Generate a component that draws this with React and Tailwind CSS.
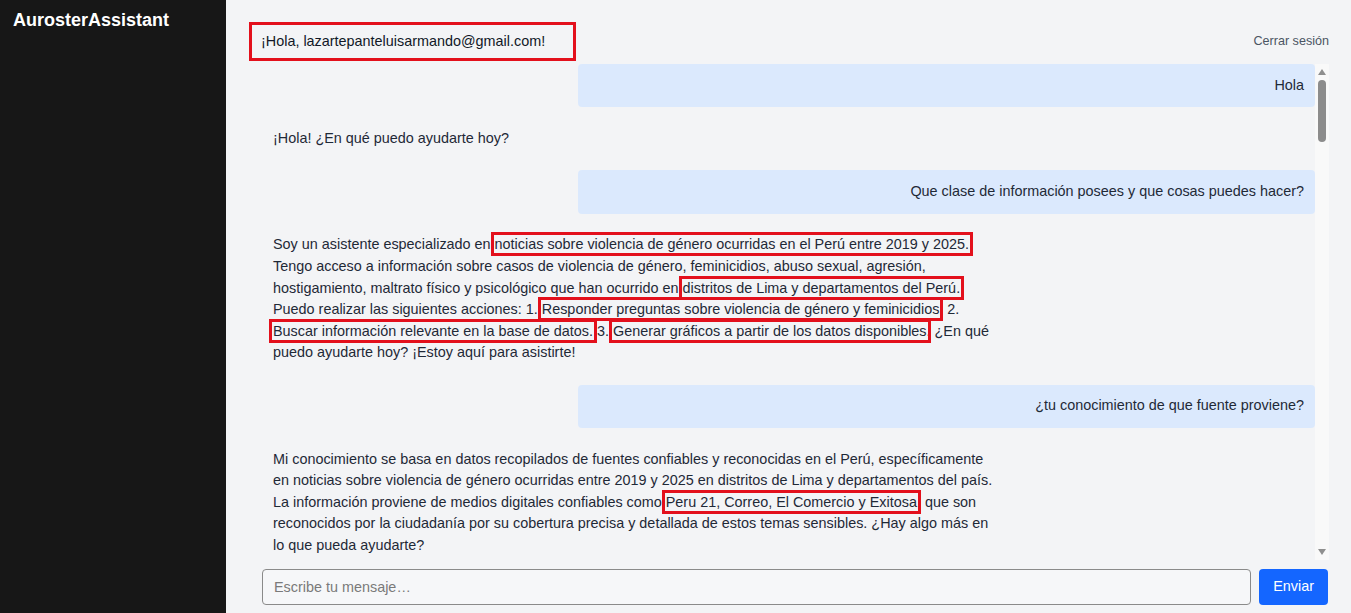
import React from "react";

const font = { fontFamily: '"Liberation Sans", Arial, sans-serif' };

function Mark({ children }) {
  return (
    <span className="outline-[3px] outline-solid outline-[#e3101c] outline-offset-[1px]">{children}</span>
  );
}

function UserMsg({ children }) {
  return (
    <div className="ml-auto w-[70%] shrink-0 rounded-[4px] bg-[#dbe9fd] px-[11px] py-[10.8px] text-right text-[#1f2937]">
      {children}
    </div>
  );
}

function BotMsg({ children }) {
  return <div className="w-[747px] shrink-0 px-[11px] py-[10.4px] text-[#1f2937]">{children}</div>;
}

function Scrollbar() {
  return (
    <div className="flex w-[14px] shrink-0 flex-col items-center bg-[#f9f9f9] py-[5px]">
      <svg width="8" height="6" viewBox="0 0 8 6" className="shrink-0">
        <path d="M4 0 L8 6 L0 6 Z" fill="#8f8f8f" />
      </svg>
      <div className="mt-[5px] h-[62px] w-[8px] shrink-0 rounded-full bg-[#8c8c8c]" />
      <div className="flex-1" />
      <svg width="8" height="6" viewBox="0 0 8 6" className="shrink-0">
        <path d="M0 0 L8 0 L4 6 Z" fill="#8f8f8f" />
      </svg>
    </div>
  );
}

export default function App() {
  return (
    <div className="flex h-screen w-full overflow-hidden text-[14.4px] leading-[21.6px]" style={font}>
      <aside className="w-[226px] shrink-0 bg-[#171717] px-[13px] pt-[8px]">
        <h1 className="text-[18px] font-bold leading-[24px] text-white">AurosterAssistant</h1>
      </aside>

      <main className="flex min-w-0 flex-1 flex-col bg-[#f3f4f6] pl-[23px] pr-[22px] pb-[8px]">
        <header className="mt-[22px] flex h-[39px] shrink-0 items-center justify-between">
          <div className="flex h-[39px] w-[327px] items-center border-[3px] border-[#e3101c] px-[9px] text-[#111827]">
            ¡Hola, lazartepanteluisarmando@gmail.com!
          </div>
          <button className="text-[12.6px] text-[#4b5563]">Cerrar sesión</button>
        </header>

        <section className="mt-[3px] flex min-h-0 flex-1">
          <div className="flex min-w-0 flex-1 flex-col gap-[10.4px] overflow-hidden pl-[13px]">
            <UserMsg>Hola</UserMsg>
            <BotMsg>¡Hola! ¿En qué puedo ayudarte hoy?</BotMsg>
            <UserMsg>Que clase de información posees y que cosas puedes hacer?</UserMsg>
            <BotMsg>
              Soy un asistente especializado en <Mark>noticias sobre violencia de género ocurridas en el Perú entre 2019 y 2025.</Mark>{" "}
              Tengo acceso a información sobre casos de violencia de género, feminicidios, abuso sexual, agresión,
              hostigamiento, maltrato físico y psicológico que han ocurrido en <Mark>distritos de Lima y departamentos del Perú.</Mark>{" "}
              Puedo realizar las siguientes acciones: 1. <Mark>Responder preguntas sobre violencia de género y feminicidios</Mark>. 2.{" "}
              <Mark>Buscar información relevante en la base de datos.</Mark> 3. <Mark>Generar gráficos a partir de los datos disponibles</Mark>.
              ¿En qué puedo ayudarte hoy? ¡Estoy aquí para asistirte!
            </BotMsg>
            <UserMsg>¿tu conocimiento de que fuente proviene?</UserMsg>
            <BotMsg>
              Mi conocimiento se basa en datos recopilados de fuentes confiables y reconocidas en el Perú, específicamente
              en noticias sobre violencia de género ocurridas entre 2019 y 2025 en distritos de Lima y departamentos del país.
              La información proviene de medios digitales confiables como <Mark>Peru 21, Correo, El Comercio y Exitosa</Mark>, que son
              reconocidos por la ciudadanía por su cobertura precisa y detallada de estos temas sensibles. ¿Hay algo más en
              lo que pueda ayudarte?
            </BotMsg>
          </div>
          <Scrollbar />
        </section>

        <form className="mt-[9px] flex shrink-0 gap-[8px] pl-[13px]" onSubmit={(e) => e.preventDefault()}>
          <input
            className="h-[36px] flex-1 rounded-[4px] border border-[#8a8a8a] bg-[#f6f7f9] px-[11px] text-[14.4px] text-[#111827] placeholder:text-[#7a7a7a] outline-none"
            placeholder="Escribe tu mensaje…"
            style={font}
          />
          <button className="mr-[1px] h-[36px] rounded-[4px] bg-[#1466ff] px-[14px] text-white" style={font}>
            Enviar
          </button>
        </form>
      </main>
    </div>
  );
}
